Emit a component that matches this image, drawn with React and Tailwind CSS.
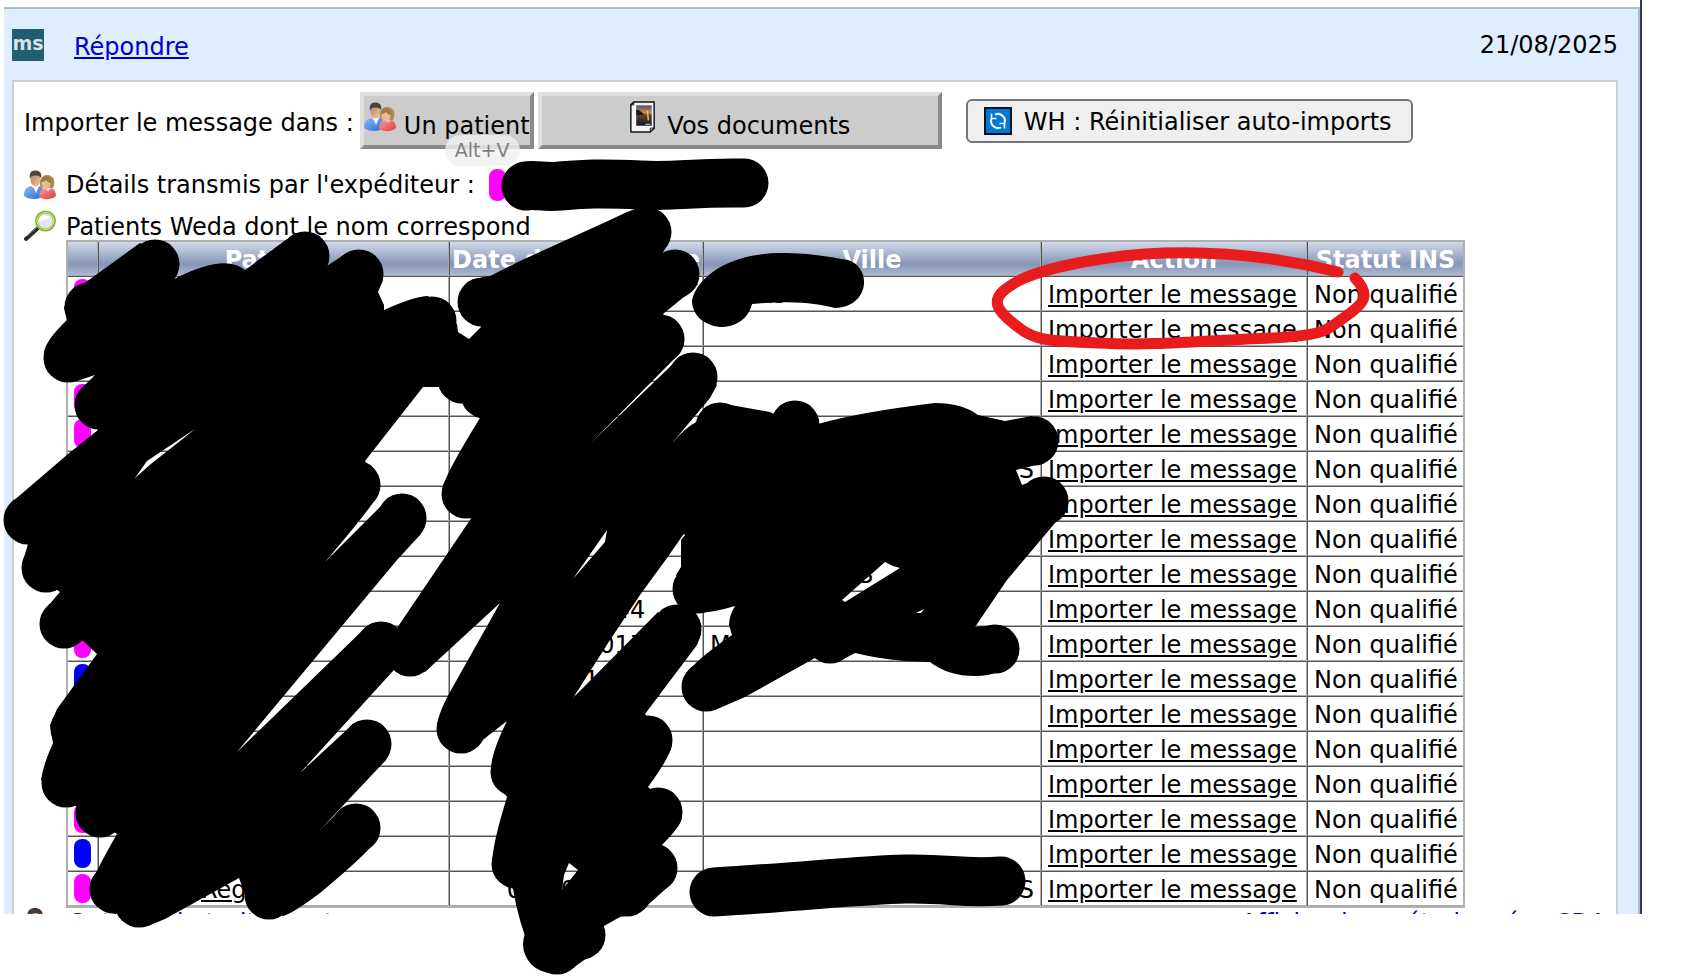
import React from "react";

const PINK = "bg-[#ff00ff]";
const BLUE = "bg-[#0000ff]";

const rows = [
  { pill: PINK, city: "ns", cityClass: "pl-12" },
  {},
  {},
  { pill: PINK },
  { pill: PINK },
  { city: "S", cityClass: "text-right" },
  {},
  {},
  { city: "S", cityClass: "pl-[148px]" },
  { date: "00/00/1944" },
  { pill: PINK, date: "00/00/2017", city: "M" },
  { pill: BLUE, date: "00/00/1900" },
  {},
  {},
  {},
  { pill: PINK },
  { pill: BLUE },
  { pill: PINK, name: "Reg", date: "00/00/2000", city: "S", cityClass: "text-right" },
];

const headers = ["", "Patient", "Date de naissance", "Ville", "Action", "Statut INS"];

function People() {
  return (
    <svg viewBox="0 0 32 30" className="h-[30px] w-8 shrink-0" aria-hidden="true">
      <defs>
        <linearGradient id="blueShirt" x1="0" y1="0" x2="1" y2="1">
          <stop offset="0" stopColor="#8fbdf5" />
          <stop offset="1" stopColor="#2468d8" />
        </linearGradient>
        <linearGradient id="redShirt" x1="0" y1="0" x2="1" y2="1">
          <stop offset="0" stopColor="#f7a0a0" />
          <stop offset="1" stopColor="#dd3b3b" />
        </linearGradient>
        <linearGradient id="face" x1="0" y1="0" x2="1" y2="1">
          <stop offset="0" stopColor="#b98059" />
          <stop offset="1" stopColor="#eccba6" />
        </linearGradient>
      </defs>
      <path d="M0 26c0-6 2-9 7-10l4 3 4-3c4 1 5 5 5 10-5 4-15 4-20 0z" fill="url(#blueShirt)" />
      <path d="M9 16l3 7 3-7z" fill="#fff" />
      <ellipse cx="11.500" cy="9.500" rx="5" ry="7" fill="url(#face)" />
      <path d="M6 9C5 3 7 0 12 0.500 17 1 18 5 17 8 15 5 13 6 10 5.500 8 5.500 7 6 6 9z" fill="#4a443f" />
      <path d="M17 18C14 12 17 5 23 5c7 0 9 7 6 13z" fill="#b08a4c" />
      <path d="M15 27c0-5 2-8 6-9l3 3 3-3c4 1 5 5 5 8-4 4-13 4-17 1z" fill="url(#redShirt)" />
      <ellipse cx="22" cy="13.500" rx="4.500" ry="6" fill="#e9bd91" />
      <path d="M17 12c0-7 10-8 11 1-3 0-5-1-6-3-1 1-3 2-5 2z" fill="#9c7a42" />
    </svg>
  );
}

function Magnifier() {
  return (
    <svg viewBox="0 0 32 32" className="h-8 w-8 shrink-0" aria-hidden="true">
      <path d="M2 29L14 18" stroke="#2b2b2b" strokeWidth="4" strokeLinecap="round" />
      <path d="M3 26L13 17" stroke="#888" strokeWidth="1" />
      <circle cx="21.500" cy="11" r="9" fill="#e6e2f8" stroke="#86b52c" strokeWidth="3" />
      <circle cx="21.500" cy="11" r="8.500" fill="none" stroke="#d3ec8c" strokeWidth="1" />
      <path d="M15 11c1-5 6-7 11-4-3 3-6 4-11 4z" fill="#fff" />
    </svg>
  );
}

function PhotoDoc() {
  return (
    <svg viewBox="0 0 27 33" className="h-8 w-7 shrink-0" aria-hidden="true">
      <defs>
        <linearGradient id="sunset" x1="0" y1="0" x2="0" y2="1">
          <stop offset="0" stopColor="#4b5068" />
          <stop offset="0.350" stopColor="#c98a4a" />
          <stop offset="0.500" stopColor="#59422f" />
          <stop offset="1" stopColor="#14161e" />
        </linearGradient>
      </defs>
      <path d="M4 1h21v27l-4 4H1V4z" fill="#f6f6fa" stroke="#111" strokeWidth="1.500" strokeLinejoin="round" />
      <path d="M1 4h3V1M21 32v-4h4" fill="none" stroke="#111" strokeWidth="1" />
      <path d="M6.500 4.500h16v21h-16z" fill="url(#sunset)" />
      <path d="M6.500 9c4 0 6 3 8 5l-8 1z" fill="#17161c" />
      <path d="M18 10l1 10" stroke="#f0b45c" strokeWidth="1.500" />
      <path d="M16 24h5" stroke="#ddd" strokeWidth="1" />
    </svg>
  );
}

function Refresh() {
  return (
    <svg viewBox="0 0 28 28" className="h-7 w-7 shrink-0" aria-hidden="true">
      <path d="M1 1h26v26H1z" fill="#0078d7" stroke="#06131f" strokeWidth="2" />
      <g fill="none" stroke="#fff" strokeWidth="2">
        <path d="M11 7.600A7 7 0 0 1 20.600 16" />
        <path d="M17 20.400A7 7 0 0 1 7.400 12" />
        <path d="M7.500 6.500v5h5M20.500 21.500v-5h-5" strokeWidth="1.600" />
      </g>
    </svg>
  );
}

const caps = [
  [155, 264], [305, 256], [359, 274], [432, 321], [356, 485], [402, 518], [381, 646], [367, 744],
  [356, 828], [269, 895], [139, 903], [114, 889], [100, 813], [66, 783], [75, 729], [64, 624],
  [46, 568], [28, 520], [99, 405], [68, 358], [89, 307],
  [647, 232], [675, 274], [660, 339], [693, 377], [482, 302], [462, 379], [466, 494], [410, 652],
  [461, 729], [515, 772], [516, 864], [557, 950], [581, 935], [627, 892], [653, 868], [658, 812],
  [648, 740], [677, 629], [485, 394],
  [720, 427], [795, 425], [1034, 441], [1044, 501], [995, 649], [830, 639], [706, 687], [697, 589],
];

function Scribbles() {
  return (
    <svg viewBox="0 0 1682 976" className="pointer-events-none absolute left-0 top-0 h-[976px] w-[1682px]" aria-hidden="true">
      {caps.map(([x, y]) => (
        <circle key={`${x}-${y}`} cx={x} cy={y} r="24.500" />
      ))}
      <circle cx="552" cy="944" r="29" />
      <path
        fillRule="evenodd"
        d="M64 308L68 297L75 290L140 243L178 270L174 279Q225 253 245 270L287 239L329 257L327 266L345 254L383 280L378 292L384 305L384 310Q415 296 428 296L457 324L458 332L469 339L450 400L440 387L423 387L365 461L379 492Q378 500 325 562L385 502L425 525L420 535L397 560L237 752L365 628L404 655L393 671L300 773L352 725L390 750L386 760L320 830L340 810L379 836Q374 848 320 893Q292 914 283 916L247 900L239 878L165 919L148 926L118 912L90 890Q92 877 117 834L76 806L41 780Q43 765 53 743L50 725L57 709L97 654L82 640L40 624Q40 614 60 592L22 564L28 544L12 502L68 454L98 430L78 392L95 375L77 381L44 352Q46 340 67 320Z
        M135 478L147 461L195 429L170 449L152 463Z"
      />
      <path
        fillRule="evenodd"
        d="M610 220L627 212L638 208L670 240L662 254L698 284L690 292L663 314L684 345L678 355L592 442L678 359L717 385L710 398L673 442L740 480L683 535L667 558L640 595L610 640L573 698L658 612L701 634L697 645L645 714L672 745Q670 757 648 787L682 818Q680 827 661 846L677 873L670 885L640 912L620 917L604 926L604 943L597 951L570 970L532 955Q518 920 513 889L492 865Q492 845 507 797L491 772Q490 755 507 721L470 750L437 726Q438 712 455 683L500 603L425 672L397 650L397 628L443 560L474 514L442 490Q444 476 480 418L462 400L445 358L469 339L481 327L482 277L490 276L520 261Z
        M573 579L600 540L607 530L605 542Z
        M562 890L564 875L569 863L578 870Z"
      />
      <path
        fillRule="evenodd"
        d="M673 442Q686 427 698 421L703 410L720 403L770 412L795 425L818 424Q860 412 935 403Q962 403 978 415L1005 421L1032 416L1056 450L1040 464L1016 470L1022 485L1043 477L1067 508L1055 523L1007 580L975 627L998 625L1017 658Q1002 676 975 676Q948 676 930 662L905 661Q880 659 855 653L838 662L815 658L745 697L715 710L683 680Q688 665 732 635L729 625Q729 616 735 606Q712 613 697 613L676 575L681 567L681 540L685 535L640 480Z
        M842 600L885 562L893 566L900 568L845 602Z M916 613L924 609L921 613Z"
      />
      <path d="M526 186C535 184 545 188 560 186C585 184 600 183 640 185S690 182 744 183" fill="none" stroke="#000" strokeWidth="49" strokeLinecap="round" strokeLinejoin="round" />
      <path d="M692 300C700 270 740 253 780 253C810 253 830 257 848 260C873 268 869 307 835 308C815 304 800 300 752 304C748 320 735 327 720 327C703 325 692 315 692 300Z" />
      <path d="M714 892C800 887 860 880 905 879S960 884 1001 881" fill="none" stroke="#000" strokeWidth="49" strokeLinecap="round" />
      <path
        d="M1338 272C1290 260 1235 251 1165 253C1110 255 1050 266 1020 280C990 296 990 306 1018 327C1035 341 1050 341 1100 343C1150 346 1200 341 1271 338C1325 335 1325 331 1342 319C1364 304 1372 296 1355 278"
        fill="none"
        stroke="#e81c1c"
        strokeWidth="11"
        strokeLinecap="round"
      />
    </svg>
  );
}

const outset = "flex h-[57px] items-center border-4 border-t-[#dfdfdf] border-l-[#dfdfdf] border-r-[#8a8a8a] border-b-[#8a8a8a] bg-[#cccccc]";
const cell = "h-[35px] whitespace-nowrap border-t border-b border-l border-r border-t-[#555] border-l-[#555] border-b-[#aaa] border-r-[#aaa] px-1.5 pb-0 pt-0.5 first:border-l-0 last:border-r-0 first:pt-0";

export default function App() {
  return (
    <div className="relative min-h-screen overflow-hidden bg-white font-['Verdana','DejaVu_Sans',sans-serif] text-[24px] leading-7 text-black">
      <div className="mr-10 h-[914px] overflow-hidden border-r-2 border-[#2c3b66] pl-1 pt-[7px]">
        <main className="border-r-2 border-t-2 border-[#b4bcc0] bg-[#deeeff] pl-2 pr-5">
          <header className="flex h-[71px] items-center">
            <span className="flex h-8 w-8 items-center justify-center bg-[#235d70] pb-1 text-[19px] font-bold leading-7 text-[#d4e4e8]">ms</span>
            <a href="#repondre" className="ml-[30px] pt-1 text-[#0000cc] underline">Répondre</a>
            <time className="ml-auto">21/08/2025</time>
          </header>

          <section className="border-2 border-[#c8d0d4] bg-white px-2.5 pt-2.5">
            <div className="flex items-start">
              <span className="mr-1.5 pt-[17px] whitespace-nowrap">Importer le message dans :</span>
              <button type="button" className={`${outset} relative mr-1 w-[174px] whitespace-nowrap`}>
                <span className="pb-2"><People /></span>
                <span className="ml-2 pt-2.5">Un patient</span>
                <kbd className="absolute left-[81px] top-[39px] h-[31px] rounded-2xl bg-[#f0f0f0]/80 px-2.5 font-['Verdana','DejaVu_Sans',sans-serif] text-[19px] leading-[31px] text-[#808080]">Alt+V</kbd>
              </button>
              <button type="button" className={`${outset} w-[404px] justify-center`}>
                <span className="pb-2"><PhotoDoc /></span>
                <span className="ml-2.5 pt-2.5">Vos documents</span>
              </button>
              <button type="button" className="ml-6 mt-[7px] flex h-11 w-[447px] items-center rounded-md border-2 border-[#767676] bg-[#efefef] pl-4 whitespace-nowrap">
                <Refresh />
                <span className="ml-3 pt-0.5">WH : Réinitialiser auto-imports</span>
              </button>
            </div>

            <div className="mt-5 flex h-8 items-center">
              <People />
              <span className="ml-2.5">Détails transmis par l'expéditeur :</span>
              <span className="ml-3.5 h-8 w-[17px] rounded-lg bg-[#ff00ff]" />
            </div>

            <div className="mt-[10px] flex h-[29px] items-center">
              <Magnifier />
              <h2 className="ml-2.5 pt-0.5">Patients Weda dont le nom correspond</h2>
            </div>

            <table className="ml-[42px] w-[1399px] table-fixed border-separate border-spacing-0 border-2 border-[#b0b0b0]">
              <colgroup>
                <col className="w-[30px]" />
                <col className="w-[351px]" />
                <col className="w-[254px]" />
                <col className="w-[338px]" />
                <col className="w-[266px]" />
                <col />
              </colgroup>
              <thead>
                <tr className="bg-linear-to-b from-[#d2daea] via-[#8795b6] via-65% to-[#b0bcd6]">
                  {headers.map((h, i) => (
                    <th key={i} className="h-[34px] whitespace-nowrap border-b border-l border-r border-l-[#555] border-b-[#aaa] border-r-[#aaa] p-0 pt-0.5 text-center font-bold text-white first:border-l-0 last:border-r-0">
                      {h}
                    </th>
                  ))}
                </tr>
              </thead>
              <tbody>
                {rows.map((r, i) => (
                  <tr key={i}>
                    <td className={cell}>
                      {r.pill && <span className={`block h-[29px] w-[17px] rounded-lg ${r.pill}`} />}
                    </td>
                    <td className={cell}>
                      {r.name && <a href="#patient" className="ml-24 underline underline-offset-2">{r.name}</a>}
                    </td>
                    <td className={`${cell} text-center`}>{r.date}</td>
                    <td className={cell}>
                      <div className={r.cityClass || ""}>{r.city}</div>
                    </td>
                    <td className={cell}>
                      <a href="#importer" className="underline underline-offset-2">Importer le message</a>
                    </td>
                    <td className={cell}>Non qualifié</td>
                  </tr>
                ))}
              </tbody>
            </table>

            <div className="flex items-start text-[#0000cc]">
              <svg viewBox="0 0 32 32" className="h-8 w-8 shrink-0" aria-hidden="true">
                <path d="M3 9C3 2 7 0 11 0s8 2 8 9z" fill="#4b3a34" />
                <path d="M7 8c1-4 8-4 9 0z" fill="#d9b08c" />
              </svg>
              <a href="#options" className="ml-3 pt-px">Options de traitement</a>
              <a href="#cda" className="ml-auto pt-px">Afficher les métadonnées CDA</a>
            </div>
          </section>
        </main>
      </div>
      <Scribbles />
    </div>
  );
}
